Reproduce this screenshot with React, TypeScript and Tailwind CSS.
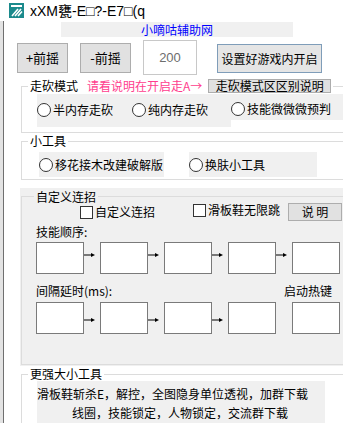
const cjk = "font-['Noto_Sans_CJK_SC','Noto_Sans',sans-serif]";

function Radio() {
  return <span className="inline-block h-[14px] w-[14px] shrink-0 rounded-full border border-[#333] bg-white" />;
}

function Check() {
  return <span className="inline-block h-[13px] w-[13px] shrink-0 border border-[#333] bg-white" />;
}

function Arrow({ top }: { top: string }) {
  return (
    <div className={`w-[16px] ${top}`}>
      <svg width="12" height="6" viewBox="0 0 12 6">
        <line x1="0" y1="3" x2="8" y2="3" stroke="#000" strokeWidth="1" />
        <polygon points="7,1 11,3 7,5" fill="#000" />
      </svg>
    </div>
  );
}

function Box() {
  return <div className="h-[32px] w-[48px] shrink-0 border border-[#7a7a7a] bg-white" />;
}

function BoxRow({ arrows, top }: { arrows: number; top: string }) {
  return (
    <div className="flex items-start">
      {[0, 1, 2, 3, 4].map((i) => (
        <div key={i} className="flex items-start">
          <Box />
          {i < 4 && (i < arrows ? <Arrow top={top} /> : <div className="w-[16px]" />)}
        </div>
      ))}
    </div>
  );
}

export default function App() {
  return (
    <div className={`h-[423px] w-[343px] overflow-hidden bg-white text-[12px] leading-[14px] text-black ${cjk}`}>
      {/* title bar */}
      <div className="flex h-[21px] items-center">
        <svg className="ml-[9px]" width="15" height="15" viewBox="0 0 15 15">
          <rect width="15" height="15" fill="#1b8a8c" />
          <rect x="2" y="2" width="11" height="2" fill="#fff" />
          <path d="M3 13 L9 6 M6 13 L12 6 M9 13 L13 8.5" stroke="#fff" strokeWidth="1.6" />
        </svg>
        <span className="ml-[6px] font-['Liberation_Sans','Noto_Sans_CJK_SC',sans-serif] text-[14px] leading-[16px]">
          xXM甕-E□?-E7□(q
        </span>
      </div>

      <div className="flex h-[402px]">
        <div className="w-[3px] bg-[#e3e3e3]" />
        <div className="w-px bg-[#6f6f6f]" />
        <div className="w-[339px] overflow-hidden">
          {/* link bar */}
          <div className="ml-[57px] mt-px h-[15px] w-[232px] bg-[#f0f0f0] text-center leading-[15px] text-[#0000ff]">
            小嘀咕辅助网
          </div>

          {/* buttons row */}
          <div className="ml-[13px] mt-[3px] flex items-start">
            <button className="mt-[3px] h-[30px] w-[51px] border border-[#adadad] bg-[#e1e1e1] text-[13px]">+前摇</button>
            <button className="ml-[12px] mt-[3px] h-[30px] w-[51px] border border-[#adadad] bg-[#e1e1e1] text-[13px]">-前摇</button>
            <div className="ml-[12px] flex h-[35px] w-[54px] items-center justify-center border border-[#c8c8c8] bg-white font-['Liberation_Sans',sans-serif] text-[13px] text-[#6d6d6d]">
              200
            </div>
            <button className="ml-[20px] mt-[4px] h-[29px] w-[105px] border border-[#7f9db9] bg-[#e5e5e5] text-[12px]">
              设置好游戏内开启
            </button>
          </div>

          {/* 走砍模式 */}
          <fieldset className="ml-[17px] mt-[4px] w-[340px] border border-[#dcdcdc] pb-[5px]">
            <legend className="ml-[6px] px-[2px]">
              <div className="flex h-[14px] items-center">
                <span>走砍模式</span>
                <span className="ml-[9px] text-[#ff3d8e]">请看说明在开启走A→</span>
                <button className="ml-[6px] h-[14px] w-[123px] border border-[#adadad] bg-[#e1e1e1] leading-[12px]">
                  走砍模式区区别说明
                </button>
              </div>
            </legend>
            <div className="ml-[15px] mt-px flex items-start">
              <div className="flex h-[33px] w-[194px] items-start bg-[#f0f0f0] pt-[9px]">
                <Radio />
                <span className="ml-[2px]">半内存走砍</span>
                <span className="ml-[19px]"><Radio /></span>
                <span className="ml-[2px]">纯内存走砍</span>
              </div>
              <div className="flex h-[26px] flex-1 items-start bg-[#f0f0f0] pt-[8px]">
                <Radio />
                <span className="ml-[2px]">技能微微微预判</span>
              </div>
            </div>
          </fieldset>

          {/* 小工具 */}
          <fieldset className="ml-[17px] mt-px w-[340px] border border-[#dcdcdc] pb-[2px]">
            <legend className="ml-[6px] px-[2px] leading-[14px]">小工具</legend>
            <div className="ml-[17px] mt-[4px] flex">
              <div className="flex h-[25px] w-[125px] items-center bg-[#f0f0f0]">
                <Radio />
                <span className="ml-[2px]">移花接木改建破解版</span>
              </div>
              <div className="ml-[25px] flex h-[25px] w-[128px] items-center bg-[#f0f0f0]">
                <Radio />
                <span className="ml-[2px]">换肤小工具</span>
              </div>
            </div>
          </fieldset>

          {/* 自定义连招 */}
          <div className="ml-[16px] mt-[8px] h-[178px] w-[340px] bg-[#f0f0f0] pt-[2px]">
            <fieldset className="ml-px h-[175px] border border-[#dcdcdc]">
              <legend className="ml-[12px] px-[2px] leading-[13px]">自定义连招</legend>
              <div className="flex items-start">
                <div className="ml-[58px] mt-[2px] flex items-center">
                  <Check />
                  <span className="ml-[2px]">自定义连招</span>
                </div>
                <div className="ml-[38px] flex items-center">
                  <Check />
                  <span className="ml-[2px]">滑板鞋无限跳</span>
                </div>
                <button className="ml-[8px] h-[18px] w-[54px] border border-[#adadad] bg-[#e1e1e1] leading-[16px]">
                  说 明
                </button>
              </div>
              <div className="ml-[14px] mt-[4px]">技能顺序:</div>
              <div className="ml-[14px] mt-[3px]">
                <BoxRow arrows={4} top="mt-[10px]" />
              </div>
              <div className="ml-[14px] mt-[10px] flex">
                <span className="w-[248px]">间隔延时(ms):</span>
                <span>启动热键</span>
              </div>
              <div className="ml-[14px] mt-[4px]">
                <BoxRow arrows={3} top="mt-[15px]" />
              </div>
            </fieldset>
          </div>

          {/* 更强大小工具 */}
          <fieldset className="ml-[17px] mt-px w-[340px] border border-[#dcdcdc]">
            <legend className="ml-[6px] px-[2px] leading-[14px]">更强大小工具</legend>
            <div className="ml-[15px] h-[60px] w-[288px] bg-[#f0f0f0] pt-[3px] leading-[19px]">
              <div>滑板鞋斩杀E，解控，全图隐身单位透视，加群下载</div>
              <div className="pl-[35px]">线圈，技能锁定，人物锁定，交流群下载</div>
            </div>
          </fieldset>
        </div>
      </div>
    </div>
  );
}
